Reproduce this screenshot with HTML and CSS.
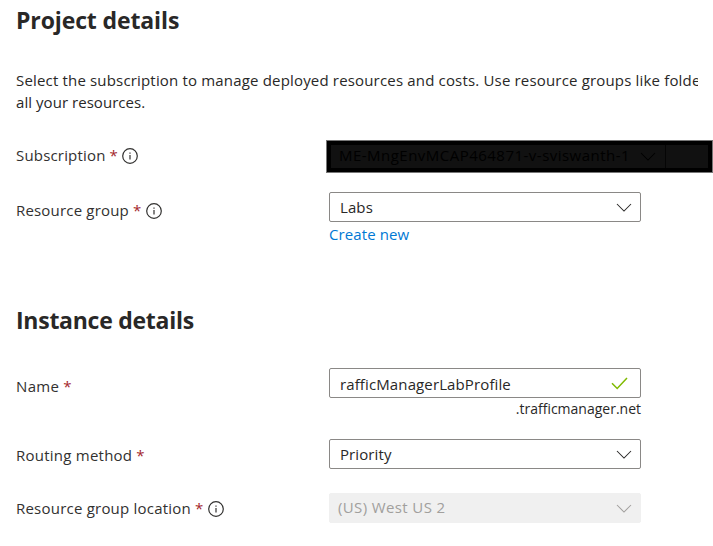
FILE: index.html
```html
<!DOCTYPE html>
<html lang="en">
<head>
<meta charset="utf-8">
<title>Create Traffic Manager profile</title>
<link rel="stylesheet" href="styles.css">
</head>
<body>
<svg width="0" height="0" class="defs" aria-hidden="true">
  <symbol id="info" viewBox="0 0 16 16"><circle cx="8" cy="8" r="7.3" fill="none" stroke="currentColor" stroke-width="1.2"/><path d="M8 7v4.5M8 4.6v1.2" fill="none" stroke="currentColor" stroke-width="1.2"/></symbol>
  <symbol id="chevron" viewBox="0 0 16 9"><path d="M1 1l7 7 7-7" fill="none" stroke="currentColor" stroke-width="1.05"/></symbol>
  <symbol id="check" viewBox="0 0 17 13"><path d="M1 6.2l5.2 5.3L16 1" fill="none" stroke="currentColor" stroke-width="1.5"/></symbol>
</svg>
<main class="form">
  <section class="project">
    <h2><span class="t-project">Project details</span></h2>
    <p class="intro"><span class="line t-intro">Select the subscription to manage deployed resources and costs. Use resource groups like folde</span><span class="line t-all">all your resources.</span></p>
    <div class="row subscription">
      <div class="label"><span>Subscription</span><span class="req">*</span><svg class="info"><use href="#info"/></svg></div>
      <div class="redacted"><div class="hidden-select"><span class="t-account">ME-MngEnvMCAP464871-v-sviswanth-1</span><svg class="chevron"><use href="#chevron"/></svg></div></div>
    </div>
    <div class="row group">
      <div class="label"><span>Resource group</span><span class="req">*</span><svg class="info"><use href="#info"/></svg></div>
      <div class="control">
        <div class="field"><span class="t-labs">Labs</span><svg class="chevron"><use href="#chevron"/></svg></div>
        <a class="create"><span class="t-create">Create new</span></a>
      </div>
    </div>
  </section>
  <section class="instance">
    <h2><span class="t-instance">Instance details</span></h2>
    <div class="row name">
      <div class="label"><span class="t-name">Name</span><span class="req">*</span></div>
      <div class="control">
        <div class="field"><span class="t-profile">rafficManagerLabProfile</span><svg class="check"><use href="#check"/></svg></div>
        <div class="suffix">.trafficmanager.net</div>
      </div>
    </div>
    <div class="row routing">
      <div class="label"><span class="t-routing">Routing method</span><span class="req">*</span></div>
      <div class="control"><div class="field"><span class="t-priority">Priority</span><svg class="chevron"><use href="#chevron"/></svg></div></div>
    </div>
    <div class="row location">
      <div class="label"><span class="t-location">Resource group location</span><span class="req">*</span><svg class="info"><use href="#info"/></svg></div>
      <div class="control"><div class="field disabled"><span class="t-west">(US) West US 2</span><svg class="chevron"><use href="#chevron"/></svg></div></div>
    </div>
  </section>
</main>
</body>
</html>
```

FILE: styles.css
```css
* { box-sizing: border-box; }
body { margin: 0; background: #fff; color: #292827; font: 15px/22px "Open Sans", "Noto Sans", sans-serif; overflow: hidden; }
svg { flex: none; display: block; }
.defs { position: absolute; }
.form { height: 546px; padding-left: 16px; overflow: hidden; white-space: nowrap; }
h2 { margin: 0; font-size: 23px; line-height: 32px; font-weight: 700; }
.t-project { letter-spacing: -0.12px; }
.t-instance { letter-spacing: -0.26px; }
.project { height: 300px; padding-top: 4px; }
.intro { margin: 33px 0 0; width: 682px; overflow: hidden; }
.line { display: block; }
.t-intro { letter-spacing: 0.172px; }
.t-all { letter-spacing: 0.05px; }
.row { display: flex; }
.label { width: 313px; flex: none; display: flex; align-items: center; height: 30px; color: #323130; letter-spacing: 0.18px; }
.t-name { letter-spacing: 0.35px; }
.t-routing { letter-spacing: 0.24px; }
.t-location { letter-spacing: 0.22px; }
.req { color: #a4262c; margin-left: 4px; width: 7px; }
.info { width: 16px; height: 16px; margin: 2px 0 0 5px; }
.group .info, .location .info { margin-left: 6px; }
.control { width: 312px; }
.field { height: 30px; border: 1px solid #8a8886; border-radius: 2px; display: flex; align-items: center; justify-content: space-between; padding: 0 8px 0 10px; }
.t-labs { letter-spacing: 0.1px; }
.t-profile { letter-spacing: 0.12px; margin-top: 1px; }
.t-priority { letter-spacing: 0.1px; }
.chevron { width: 16px; height: 9px; margin-top: 1px; }
.check { width: 17px; height: 13px; margin-right: 4px; color: #7fba00; }
.subscription { margin-top: 27px; height: 33px; }
.redacted { width: 387px; height: 33px; margin-left: -3px; flex: none; background: #111; border: 5px solid #000; outline: 1px solid #777; outline-offset: -1px; color: #000; }
.hidden-select { width: 335px; height: 23px; display: flex; align-items: center; justify-content: space-between; padding: 0 9px 0 8px; border-right: 1px solid #050505; }
.hidden-select .chevron { margin-top: -1px; }
.t-account { letter-spacing: 0.48px; margin-top: -3px; }
.group { margin-top: 19px; }
.group .label { height: 36px; }
.create { display: block; line-height: 25px; color: #0078d4; letter-spacing: 0.1px; }
.instance { padding-top: 4px; }
.name { margin-top: 32px; height: 54px; }
.name .label { height: 35px; }
.suffix { text-align: right; line-height: 21px; font-size: 14px; }
.routing { margin-top: 17px; height: 30px; }
.routing .label { height: 31px; }
.location { margin-top: 24px; }
.location .label { height: 30px; }
.disabled { border-color: #f0f0f0; background: #f0f0f0; color: #a19f9d; padding-left: 8px; }
.t-west { letter-spacing: 0.38px; margin-top: -2px; }
```
